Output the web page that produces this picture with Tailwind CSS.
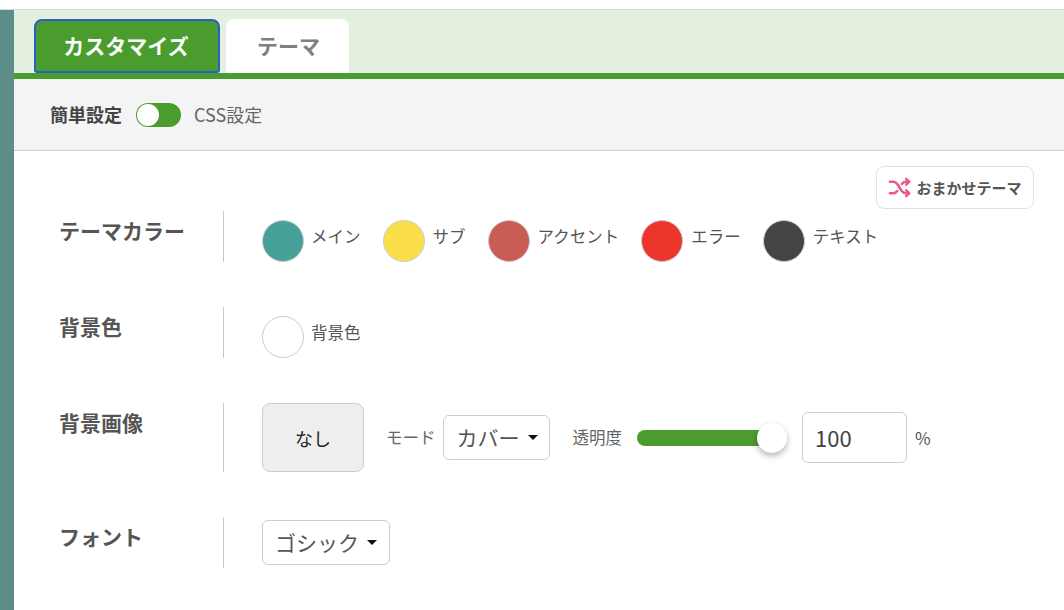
<!DOCTYPE html>
<html lang="ja">
<head>
<meta charset="utf-8">
<script src="https://cdn.jsdelivr.net/npm/@tailwindcss/browser@4"></script>
</head>
<body class="bg-white overflow-hidden font-['Noto_Sans_CJK_JP','Noto_Sans',sans-serif]">
<div class="w-[1064px] h-[610px] flex flex-col overflow-hidden">
  <div class="h-[9px] shrink-0 bg-white"></div>
  <div class="h-px shrink-0 bg-[#d9d9d9]"></div>
  <div class="flex flex-1 min-h-0">
    <aside class="w-[14px] shrink-0 bg-[#5c8d89]"></aside>
    <main class="flex-1 flex flex-col min-w-0">
      <div class="h-[63px] shrink-0 bg-[#e4f0df] flex items-end pl-5 gap-[6px]">
        <button class="w-[186px] h-[54px] rounded-t-lg rounded-b-[3px] bg-[#4a9c2f] border-2 border-[#2a5fc4] text-white font-bold text-[21px] leading-none flex items-center justify-center pb-[2px] pr-[2px]">カスタマイズ</button>
        <button class="w-[123px] h-[54px] rounded-t-lg bg-white text-[#808080] font-bold text-[21px] leading-none flex items-center justify-center pb-[2px] pl-[2px]">テーマ</button>
      </div>
      <div class="h-[6px] shrink-0 bg-[#4a9c2f]"></div>
      <div class="h-[71px] shrink-0 bg-[#f4f4f4] border-b border-[#cfcfcf] box-content flex items-center pl-[36px]">
        <span class="text-[18px] font-bold text-[#444] leading-none pb-[2px]">簡単設定</span>
        <span class="ml-[14px] w-[45px] h-6 rounded-full bg-[#4a9c2f] flex items-center pl-px">
          <span class="w-[22px] h-[22px] rounded-full bg-white"></span>
        </span>
        <span class="ml-[13px] text-[18px] text-[#666] leading-none pb-[2px]">CSS設定</span>
      </div>
      <div class="flex justify-end pr-[30px] pt-[15px]">
        <button class="w-[158px] h-[43px] rounded-lg border border-[#e2e2e2] bg-white flex items-center justify-center gap-[5px] text-[15px] font-bold text-[#555] leading-none">
          <svg class="w-[23px] h-[23px]" viewBox="0 0 24 24" fill="none" stroke="#ec5a8a" stroke-width="2.6" stroke-linecap="round" stroke-linejoin="round"><path d="M2 6h3.5c2 0 3.2 1 4.4 2.6l4.2 6.8c1.2 1.6 2.4 2.6 4.4 2.600H22"/><path d="M2 18h3.5c2 0 3.2-1 4.2-2.4M14.300 8.400C15.400 7 16.500 6 18.500 6H22"/><path d="M19 3l3 3-3 3M19 15l3 3-3 3"/></svg>
          おまかせテーマ
        </button>
      </div>
      <div class="pl-[45px] mt-[2px] flex flex-col gap-[45px]">
        <section class="flex h-[51px]">
          <h2 class="w-[165px] pt-[5px] text-[21px] font-bold text-[#555] leading-[28px] border-r border-[#c8c8c8]">テーマカラー</h2>
          <div class="pl-[38px] pt-[9px] flex gap-[22px] text-[16.500px] text-[#555] leading-none">
            <div class="flex gap-[7px]"><span class="w-[42px] h-[42px] rounded-full border border-[#ccc] bg-[#48a09a]"></span><span class="pt-[8px]">メイン</span></div>
            <div class="flex gap-[8px]"><span class="w-[42px] h-[42px] rounded-full border border-[#ccc] bg-[#fbdf4a]"></span><span class="pt-[8px]">サブ</span></div>
            <div class="flex gap-[8px]"><span class="w-[42px] h-[42px] rounded-full border border-[#ccc] bg-[#c95c54]"></span><span class="pt-[8px]">アクセント</span></div>
            <div class="flex gap-[8px]"><span class="w-[42px] h-[42px] rounded-full border border-[#ccc] bg-[#ee3529]"></span><span class="pt-[8px]">エラー</span></div>
            <div class="flex gap-[8px]"><span class="w-[42px] h-[42px] rounded-full border border-[#ccc] bg-[#444444]"></span><span class="pt-[8px]">テキスト</span></div>
          </div>
        </section>
        <section class="flex h-[51px]">
          <h2 class="w-[165px] pt-[5px] text-[21px] font-bold text-[#555] leading-[28px] border-r border-[#c8c8c8]">背景色</h2>
          <div class="pl-[38px] pt-[9px] flex text-[16.500px] text-[#555] leading-none">
            <div class="flex gap-[7px]"><span class="w-[42px] h-[42px] rounded-full border border-[#ccc] bg-white"></span><span class="pt-[8px]">背景色</span></div>
          </div>
        </section>
        <section class="flex h-[69px]">
          <h2 class="w-[165px] pt-[5px] text-[21px] font-bold text-[#555] leading-[28px] border-r border-[#c8c8c8]">背景画像</h2>
          <div class="pl-[38px] flex items-start">
            <button class="w-[102px] h-[69px] rounded-lg border border-[#cdcdcd] bg-[#eeeeee] text-[18px] text-[#222] leading-none">なし</button>
            <span class="ml-[22px] mt-[26px] text-[16.500px] text-[#666] leading-none">モード</span>
            <button class="ml-[7px] mt-[12px] w-[107px] h-[45px] rounded-md border border-[#cdcdcd] bg-white flex items-center pl-[13px] text-[21px] text-[#555] leading-none">カバー<span class="ml-[8px] w-0 h-0 border-x-[5px] border-x-transparent border-t-[5px] border-t-[#111]"></span></button>
            <span class="ml-[23px] mt-[26px] text-[16.500px] text-[#666] leading-none">透明度</span>
            <div class="relative ml-[15px] mt-[27px] w-[135px] h-4 rounded-full bg-[#4a9c2f]">
              <span class="absolute left-[120px] -top-[7px] w-[30px] h-[30px] rounded-full bg-white shadow-[0_3px_6px_rgba(0,0,0,0.3)]"></span>
            </div>
            <div class="ml-[30px] mt-[9px] w-[105px] h-[51px] rounded-md border border-[#cdcdcd] bg-white flex items-center pl-[12px] pb-[2px] text-[22px] text-[#444] leading-none">100</div>
            <span class="ml-[8px] mt-[26px] text-[17px] text-[#555] leading-none">%</span>
          </div>
        </section>
        <section class="flex h-[51px]">
          <h2 class="w-[165px] pt-[5px] text-[21px] font-bold text-[#555] leading-[28px] border-r border-[#c8c8c8]">フォント</h2>
          <div class="pl-[38px] pt-[3px]">
            <button class="w-[128px] h-[45px] rounded-md border border-[#cdcdcd] bg-white flex items-center pl-[12px] text-[21px] text-[#555] leading-none">ゴシック<span class="ml-[8px] w-0 h-0 border-x-[5px] border-x-transparent border-t-[5px] border-t-[#111]"></span></button>
          </div>
        </section>
      </div>
    </main>
  </div>
</div>
</body>
</html>
